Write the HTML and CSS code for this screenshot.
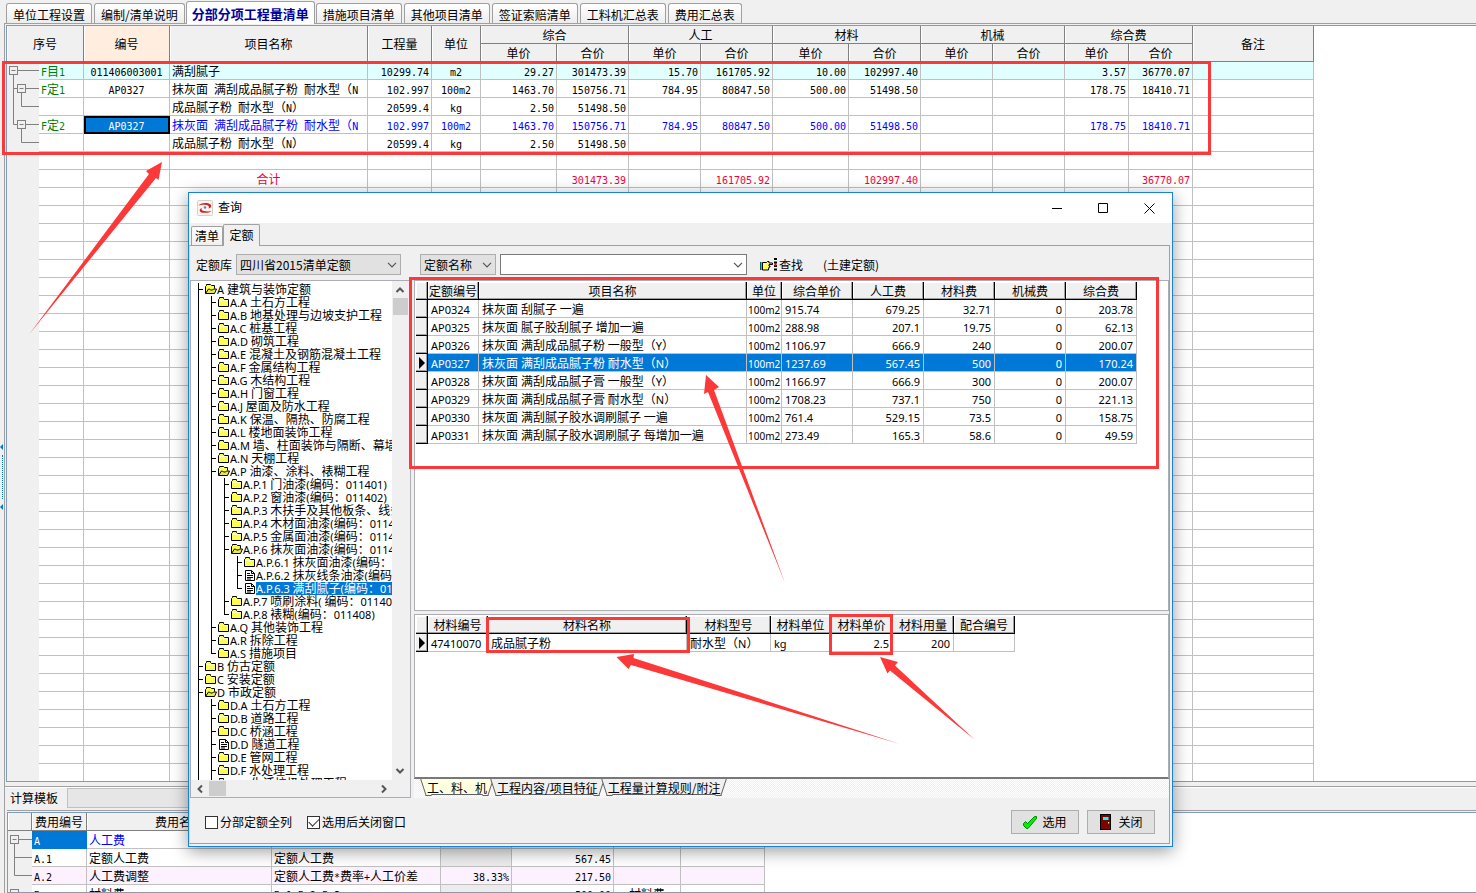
FILE: index.html
```html
<!DOCTYPE html>
<html lang="zh-CN">
<head>
<meta charset="utf-8">
<title>分部分项工程量清单</title>
<link rel="stylesheet" href="styles.css">
</head>
<body>
<svg class="defs" width="0" height="0" aria-hidden="true">
  <symbol id="folder" viewBox="0 0 12 10"><path d="M.5 9.500v-7l1-1v-1h4v1l1 1h4v7z" fill="#ffff50" stroke="#000"/><path d="M1.500 3.500h8" stroke="#ffffc8"/></symbol>
  <symbol id="open" viewBox="0 0 12 10"><path d="M.5 9V2.500l1-1v-1h4l1 1h3v3" fill="#ffff50" stroke="#000"/><path d="M.5 9.500l3-4.500h1l1 1h2l1-1h3l-2 4.500z" fill="#e8e850" stroke="#000"/></symbol>
  <symbol id="page" viewBox="0 0 12 11"><path d="M1.500.5h6l3 3v7h-9z" fill="#fff" stroke="#000"/><path d="M7.500.5v3h3M3 3.500h3M3 5.500h6M3 7.500h6M3 9h4" fill="none" stroke="#000"/></symbol>
  <symbol id="chev" viewBox="0 0 10 6"><path d="M1 .8l4 4 4-4" fill="none" stroke="#555" stroke-width="1.200"/></symbol>
  <symbol id="arrow" viewBox="0 0 10 6"><path d="M1.500 5L5 1.500 8.500 5" fill="none" stroke="#555" stroke-width="2"/></symbol>
</svg>

<div class="app">
  <div class="splitter">
    <svg width="4" height="6" viewBox="0 0 4 6"><path d="M0 3l3-3v6z" fill="#0078d7"/></svg>
    <i></i>
    <svg width="4" height="6" viewBox="0 0 4 6"><path d="M0 3l3-3v6z" fill="#0078d7"/></svg>
  </div>
  <main class="main">
    <nav class="tabs">
      <button>单位工程设置</button><button>编制/清单说明</button><button class="on">分部分项工程量清单</button><button>措施项目清单</button><button>其他项目清单</button><button>签证索赔清单</button><button>工料机汇总表</button><button>费用汇总表</button>
    </nav>
    <section class="panel">
      <div class="gridbox">
        <table class="grid">
          <colgroup id="mainCols"></colgroup>
          <thead>
            <tr><th rowspan="2" colspan="2">序号</th><th rowspan="2" class="hot">编号</th><th rowspan="2">项目名称</th><th rowspan="2">工程量</th><th rowspan="2">单位</th><th colspan="2">综合</th><th colspan="2">人工</th><th colspan="2">材料</th><th colspan="2">机械</th><th colspan="2">综合费</th><th rowspan="2">备注</th></tr>
            <tr><th>单价</th><th>合价</th><th>单价</th><th>合价</th><th>单价</th><th>合价</th><th>单价</th><th>合价</th><th>单价</th><th>合价</th></tr>
          </thead>
          <tbody id="mainRows"></tbody>
        </table>
      </div>
    </section>
    <section class="lower">
      <div class="tmpl"><label for="tmpl">计算模板</label><select id="tmpl" disabled><option></option></select></div>
      <div class="gridbox">
        <table class="grid">
          <colgroup id="feeCols"></colgroup>
          <thead><tr><th></th><th>费用编号</th><th>费用名称</th><th></th><th></th><th></th><th></th><th></th></tr></thead>
          <tbody id="feeRows"></tbody>
        </table>
      </div>
    </section>
  </main>
</div>

<div class="dialog" role="dialog" aria-labelledby="dlgTitle">
  <header class="title">
    <svg width="16" height="16" viewBox="0 0 16 16"><rect x=".5" y=".5" width="15" height="15" rx="1" fill="#fbf3f0" stroke="#d8cfcb"/><path d="M1.500 5.500C3 3 10 2 13.500 4.500c1.500 1.500.5 3.500-2 4 1-1.500.5-3-2-3.500-3-.5-6-.5-8 .5z" fill="#cf2520"/><path d="M14.500 11c-1.500 2-8 2.500-11 1-1.500-1.500-1-3.500 1.500-4-1 1.500-.5 2.500 2 3 3 .5 5.500.5 7.500 0z" fill="#cf2520"/><circle cx="8" cy="7.500" r="1.200" fill="#4a86c8"/></svg>
    <h1 id="dlgTitle">查询</h1>
    <div class="wbtns">
      <button aria-label="最小化"><svg width="11" height="11"><path d="M0 5.500h10" stroke="#000"/></svg></button>
      <button aria-label="最大化"><svg width="11" height="11"><path d="M.5.5h9v9h-9z" stroke="#000" fill="none"/></svg></button>
      <button aria-label="关闭窗口"><svg width="11" height="11"><path d="M.5.5l10 10M10.500.5l-10 10" stroke="#000"/></svg></button>
    </div>
  </header>
  <nav class="dtabs"><button>清单</button><button class="on">定额</button></nav>
  <div class="dpage">
    <div class="bar">
      <label for="lib">定额库</label>
      <span class="pick lib"><select id="lib"><option>四川省2015清单定额</option></select><svg width="10" height="6"><use href="#chev"/></svg></span>
      <span class="pick field"><select aria-label="查找字段"><option>定额名称</option></select><svg width="10" height="6"><use href="#chev"/></svg></span>
      <span class="pick text"><input type="text" aria-label="查找内容"><svg width="10" height="6"><use href="#chev"/></svg></span>
      <button class="find"><svg width="17" height="14" viewBox="0 0 17 14"><path d="M0 4h2.500v8H0z" fill="#00d0d0"/><path d="M.5 4v8" stroke="#006060"/><path d="M2.500 4.500h4l1-1h1.500v1.500h3.500v1.500H9v1.500h1v1H9v1.500h-.5v1.500h-6z" fill="#ffff60" stroke="#000"/><path d="M15.500 0v14" stroke="#000" stroke-width="3" stroke-dasharray="2 1.500"/><path d="M15.500 5v3" stroke="#e00" stroke-width="2"/></svg>查找</button>
      <span>(土建定额)</span>
    </div>
    <div class="body">
      <div class="treebox">
        <ul class="tree" id="tree"></ul>
        <div class="vs"><svg width="10" height="6"><use href="#arrow"/></svg><i></i><svg class="down" width="10" height="6"><use href="#arrow"/></svg></div>
        <div class="hs"><svg class="prev" width="10" height="6"><use href="#arrow"/></svg><i></i><svg class="next" width="10" height="6"><use href="#arrow"/></svg></div>
      </div>
      <div class="tables">
        <div class="box quota">
          <table class="db">
            <colgroup id="quotaCols"></colgroup>
            <thead><tr><th></th><th>定额编号</th><th>项目名称</th><th>单位</th><th>综合单价</th><th>人工费</th><th>材料费</th><th>机械费</th><th>综合费</th></tr></thead>
            <tbody id="quotaRows"></tbody>
          </table>
        </div>
        <div class="box mats">
          <table class="db">
            <colgroup id="matCols"></colgroup>
            <thead><tr><th></th><th>材料编号</th><th>材料名称</th><th>材料型号</th><th>材料单位</th><th>材料单价</th><th>材料用量</th><th>配合编号</th></tr></thead>
            <tbody id="matRows"></tbody>
          </table>
        </div>
        <nav class="sheets"><button class="on">工、料、机</button><button>工程内容/项目特征</button><button>工程量计算规则/附注</button></nav>
      </div>
    </div>
    <footer class="foot">
      <label><input type="checkbox">分部定额全列</label>
      <label><input type="checkbox" checked>选用后关闭窗口</label>
      <div class="acts">
        <button><svg width="14" height="13" viewBox="0 0 14 13"><path d="M.5 7.500l2-2 2 2L11.500.5h2v2L5 12.500H3.500L.5 9.500z" fill="#00f000" stroke="#008a00"/></svg>选用</button>
        <button><svg width="14" height="16" viewBox="0 0 14 16"><rect x="1.500" y=".5" width="10" height="15" fill="#800000" stroke="#000"/><path d="M4 3h5.500v3H4z" fill="#0ff"/><path d="M9 8h1.200v1.500H9z" fill="#ff0"/></svg>关闭</button>
      </div>
    </footer>
  </div>
</div>

<svg class="marks" width="1220" height="760" aria-hidden="true">
  <g fill="none" stroke="#fc3838" stroke-width="3">
    <rect x="3.500" y="62.500" width="1206" height="91"/>
    <rect x="410.500" y="278.500" width="747" height="189"/>
    <rect x="487.500" y="618.500" width="201" height="33"/>
    <rect x="830.500" y="615.500" width="61" height="38"/>
  </g>
  <g fill="#fc3838">
    <path d="M162 162L146 171l3 3L29 334.500 156 178l2.500 2z"/>
    <path d="M706 375l13 12-5 3 71 193-77-191-4 2z"/>
    <path d="M616.500 657l17.500-3-.5 4L900 744 631 665l-2.500 4z"/>
    <path d="M880 657l18 5-3 3.500L975 740l-85-69.500-2.500 3z"/>
  </g>
</svg>
<script src="app.js"></script>
</body>
</html>
```

FILE: styles.css
```css
* { box-sizing: border-box; }
html, body { height: 100%; margin: 0; }
body {
  position: relative;
  overflow: hidden;
  background: #f0f0f0;
  color: #000;
  font: 12px/16px "Noto Sans CJK SC", sans-serif;
}
button, input, select { font: inherit; color: inherit; margin: 0; }
button { border: 0; padding: 0; background: none; white-space: nowrap; }
svg { display: block; flex: none; }
.defs { position: absolute; }

.app { display: flex; height: 100%; }
.splitter { width: 4px; flex: none; display: flex; flex-direction: column; align-items: center; justify-content: center; gap: 5px; padding-top: 60px; }
.splitter i { height: 44px; border-left: 1px dotted #0078d7; }
.main { flex: 1; min-width: 0; display: flex; flex-direction: column; }

.tabs { display: flex; align-items: flex-end; gap: 2px; height: 23px; padding-left: 2px; flex: none; }
.tabs button { height: 20px; padding: 2px 6px 0; border: 1px solid #a0a0a0; border-bottom: 0; border-radius: 3px 3px 0 0; background: linear-gradient(#fff, #ececec); }
.tabs .on { height: 23px; margin: 0 -1px -1px; padding: 1px 5px 0; background: #fff; color: #0000a0; font-size: 13px; font-weight: bold; z-index: 1; }

.panel { flex: 1; min-height: 0; border: solid #a0a0a0; border-width: 1px 0 0 1px; padding: 1px 0 4px 1px; display: flex; }
.gridbox { flex: 1; min-width: 0; overflow: hidden; background: #fff; border: 1px solid #7f9db9; border-right: 0; }
.grid, .db { border-collapse: separate; border-spacing: 0; table-layout: fixed; width: 0; }
.grid th, .grid td, .db th, .db td { height: 18px; padding: 0 2px; line-height: 16px; font-weight: normal; white-space: pre; overflow: hidden; }
.grid th { background: #f0f0f0; border: solid #808080; border-width: 0 1px 1px 0; box-shadow: inset 1px 0 #fff; }
.grid th.hot { background: #ffeddf; }
.grid td { border: solid #c0c0c0; border-width: 0 1px 1px 0; }
.grid td.t { padding: 0; border: 0; background: #f0f0f0; }
.grid .r, .db .r { text-align: right; }
.grid .c { text-align: center; }
.grid .green { color: #008000; }
.grid .n { font: 10px/0 "DejaVu Sans Mono", monospace; }
.cyan td { background: #e1ffff; }
.blue td { color: #0000ff; }
.total td { color: #f0003c; }
.pink td { background: #fdf0ff; }
.grid td.sel { background: #0078d7; color: #fff; border-color: #0078d7; }
.grid td.frame { border-color: #000; box-shadow: inset 0 0 0 1px #000, inset 2px 2px #000; }
.grid td.grey { background: #ececec; }
.blue td.green { color: #008000; }

.lower { flex: none; height: 107px; border: solid #a0a0a0; border-width: 1px 0 0 1px; padding-left: 2px; display: flex; flex-direction: column; box-shadow: inset 0 1px #fff; }
.tmpl { display: flex; align-items: center; gap: 9px; height: 24px; padding: 0 0 1px 3px; border-bottom: 1px solid #a0a0a0; margin-bottom: 1px; flex: none; }
.tmpl select { width: 500px; height: 20px; appearance: none; border: 1px solid #adadad; background: #e3e3e3; }

.dialog {
  position: absolute; left: 188px; top: 192px; width: 985px; height: 655px;
  display: flex; flex-direction: column;
  border: 1px solid #1883d7; background: #f0f0f0;
  box-shadow: 0 4px 16px rgba(0, 0, 0, .4);
}
.title { display: flex; align-items: center; gap: 5px; height: 30px; padding-left: 8px; background: #fff; flex: none; }
.title h1 { margin: 0; font-size: 12px; line-height: 14px; padding-bottom: 2px; font-weight: normal; flex: 1; }
.wbtns { display: flex; height: 30px; }
.wbtns button { width: 46px; display: grid; place-items: center; }
.dtabs { display: flex; align-items: flex-end; height: 22px; padding-left: 2px; flex: none; }
.dtabs button { height: 19px; padding: 0 3px; width: 32px; border: 1px solid #a0a0a0; border-bottom: 0; border-radius: 2px 2px 0 0; background: linear-gradient(#fff, #f0f0f0); }
.dtabs .on { height: 22px; width: 37px; padding: 0 5px 2px; margin-bottom: -1px; background: #f0f0f0; z-index: 1; }
.dpage { flex: 1; min-height: 0; margin: 0 2px 2px 0; border: 1px solid #a0a0a0; border-left-color: #d8d8d8; display: flex; flex-direction: column; }
.bar { display: flex; align-items: center; height: 34px; padding: 3px 0 0 6px; flex: none; }
.pick { position: relative; height: 21px; margin-left: 4px; }
.pick select, .pick input { width: 100%; height: 21px; appearance: none; display: block; border: 1px solid #adadad; border-radius: 0; background: #e1e1e1; padding: 0 3px; outline: 0; }
.pick svg { position: absolute; right: 4px; top: 8px; }
.pick input { background: #fff; border-color: #7a7a7a; }
.lib { width: 165px; }
.field { width: 76px; margin-left: 19px; }
.text { width: 247px; }
.find { display: flex; align-items: center; gap: 2px; margin: 0 20px 0 13px; }

.body { flex: 1; min-height: 0; display: grid; grid-template-columns: 221px 1fr; gap: 3px; }
.treebox { display: grid; grid-template: 1fr 17px / 1fr 18px; min-height: 0; border: 1px solid #adadb4; background: #fff; }
.tree { list-style: none; margin: 0; padding: 2px 0 0 7px; overflow: hidden; min-height: 0; min-width: 0; }
.tree li { display: flex; height: 13px; line-height: 11px; white-space: pre; }
.tree .g { width: 13px; height: 13px; flex: none; background: linear-gradient(#000, #000) 0 0 / 1px 100% no-repeat; }
.tree .g.off { background: none; }
.tree .g.end { width: 7px; background: linear-gradient(#000, #000) 0 0 / 1px 100% no-repeat, linear-gradient(#000, #000) 0 6px / 5px 1px no-repeat; }
.tree .g.end.last { background-size: 1px 7px, 5px 1px; }
.tree svg { margin-top: 1px; }
.tree .sel { background: #0078d7; color: #fff; flex: none; }
.dialog .n { font: 11px/0 "Noto Sans", sans-serif; }
.dialog .unit { padding: 0 1px; }
.dialog .unit .n { font-size: 10px; }
.vs, .hs { background: #f0f0f0; display: flex; align-items: center; }
.vs { flex-direction: column; padding: 6px 2px 6px 0; }
.vs i { width: 15px; height: 17px; margin-top: 5px; background: #cdcdcd; }
.hs { grid-column: 1 / -1; padding: 0 21px 0 4px; }
.hs i { width: 17px; height: 15px; margin-left: 4px; background: #cdcdcd; }
.down { transform: rotate(180deg); margin-top: auto; }
.prev { transform: rotate(-90deg); }
.next { transform: rotate(90deg); margin-left: auto; }

.tables { display: flex; flex-direction: column; min-width: 0; min-height: 0; }
.box { background: #fff; border: 1px solid #adadb4; padding: 1px; overflow: hidden; }
.quota { flex: 1; }
.mats { flex: 0 0 165px; margin-top: 3px; border-bottom: 2px solid #787878; }
.db th { background: #f0f0f0; border: solid #000; border-width: 0 1px 1px 0; padding: 0; box-shadow: inset -1px -1px #a0a0a0, inset 1px 1px #fff; }
.db td { border: solid #c0c0c0; border-width: 0 1px 1px 0; }
.db td.l { padding-left: 3px; }
.db td.r { padding-right: 3px; }
.db td.ind { background: #f0f0f0; border-color: #000; padding: 0 0 0 3px; box-shadow: inset -1px -1px #a0a0a0; }
.db tr.cur td { background: #0078d7; color: #fff; }
.db tr.cur td.ind { background: #f0f0f0; }
.sheets { display: flex; height: 19px; padding-left: 10px; gap: 6px; align-items: flex-start; background: repeating-conic-gradient(#fff 0 25%, #f0f0f0 0 50%) 0 0 / 2px 2px; flex: none; }
.sheets button { position: relative; isolation: isolate; height: 16px; line-height: 17px; padding: 0 1px; margin-left: 2px; background: #f0f0f0; border-bottom: 1px solid #606060; }
.sheets button::before, .sheets button::after { content: ""; position: absolute; top: 0; width: 5px; height: 16px; background: inherit; border-bottom: 1px solid #606060; z-index: -1; }
.sheets button::before { left: -3px; transform: skewX(18deg); border-left: 1px solid #606060; }
.sheets button::after { right: -3px; transform: skewX(-18deg); border-right: 1px solid #606060; }
.sheets .on { background: #ffffe1; }

.foot { display: flex; align-items: center; gap: 15px; height: 45px; padding: 3px 14px 0 15px; flex: none; }
.foot label { display: flex; align-items: center; gap: 2px; }
.foot input { appearance: none; width: 13px; height: 13px; border: 1px solid #333; background: #fff; display: grid; place-items: center; }
.foot input:checked::after { content: ""; width: 9px; height: 5px; border: solid #333; border-width: 0 0 1px 1px; transform: rotate(-45deg); margin-bottom: 3px; }
.acts { display: flex; gap: 8px; margin-left: auto; }
.acts button { width: 68px; height: 24px; display: flex; align-items: center; justify-content: center; gap: 5px; border: 1px solid #adadad; background: #e1e1e1; }

.marks { position: absolute; left: 0; top: 0; pointer-events: none; }
```

FILE: app.js
```js
const $ = id => document.getElementById(id);
// Latin runs use their own narrower face beside the Chinese glyphs.
const fmt = s => String(s).replace(/[ -~]+/g, m => `<span class="n">${m}</span>`);
const cols = (id, list) => { $(id).innerHTML = list.map(w => `<col style="width:${w}px">`).join(''); };

const lines = {
  root: '<rect x="2.500" y="4.500" width="8" height="8"/><path d="M4.500 8.500h4M10.500 8.500H32M6.500 12.500V18"/>',
  mid: '<rect x="10.500" y="4.500" width="8" height="8"/><path d="M12.500 8.500h4M18.500 8.500H32M6.500 0v18M6.500 8.500h4M14.500 12.500V18"/>',
  last: '<rect x="10.500" y="4.500" width="8" height="8"/><path d="M12.500 8.500h4M18.500 8.500H32M6.500 0v8.500h4M14.500 12.500V18"/>',
  leaf: '<path d="M6.500 0v18M14.500 0v8.500H32"/>',
  leafEnd: '<path d="M14.500 0v8.500H32"/>',
  feeMid: '<path d="M6.500 0v18M6.500 8.500H24"/>',
  feeEnd: '<path d="M6.500 0v8.500H24"/>'
};
const tree = (k, w) => `<td class="t">${k ? `<svg width="${w}" height="18" fill="none" stroke="#808080">${lines[k]}</svg>` : ''}</td>`;

cols('mainCols', [32, 45, 86, 198, 64, 49, 76, 72, 72, 72, 76, 72, 72, 72, 64, 64, 121]);
const rows = [
  ['root', 'cyan', 'F目1', '011406003001', '满刮腻子', '10299.74', 'm2', '29.27', '301473.39', '15.70', '161705.92', '10.00', '102997.40', '', '', '3.57', '36770.07', ''],
  ['mid', '', 'F定1', 'AP0327', '抹灰面 满刮成品腻子粉 耐水型（N', '102.997', '100m2', '1463.70', '150756.71', '784.95', '80847.50', '500.00', '51498.50', '', '', '178.75', '18410.71', ''],
  ['leaf', '', '', '', '成品腻子粉 耐水型（N）', '20599.4', 'kg', '2.50', '51498.50'],
  ['last', 'blue', 'F定2', 'AP0327', '抹灰面 满刮成品腻子粉 耐水型（N', '102.997', '100m2', '1463.70', '150756.71', '784.95', '80847.50', '500.00', '51498.50', '', '', '178.75', '18410.71', ''],
  ['leafEnd', '', '', '', '成品腻子粉 耐水型（N）', '20599.4', 'kg', '2.50', '51498.50'],
  ['', ''],
  ['', 'total', '', '', '合计', '', '', '', '301473.39', '', '161705.92', '', '102997.40', '', '', '', '36770.07', '']
];
while (rows.length < 60) rows.push(['', '']);
$('mainRows').innerHTML = rows.map(([k, cls, ...v]) => {
  let h = `<tr class="${cls}">` + tree(k, 32);
  for (let i = 0; i < 16; i++) {
    let c = i === 0 ? 'green' : i === 1 || i === 4 ? 'c' : i === 2 ? (cls === 'total' ? 'c' : '') : 'r';
    if (cls === 'blue' && i === 1) c += ' sel frame';
    h += `<td class="${c}">${fmt(v[i] || '')}</td>`;
  }
  return h + '</tr>';
}).join('');

cols('feeCols', [24, 55, 185, 169, 71, 102, 67, 84]);
$('feeRows').innerHTML = [
  ['root', 'blue', 'A', '人工费', '', '', '', ''],
  ['feeMid', '', 'A.1', '定额人工费', '定额人工费', '', '567.45', ''],
  ['feeEnd', 'pink', 'A.2', '人工费调整', '定额人工费*费率+人工价差', '38.33%', '217.50', ''],
  ['root', '', 'B', '材料费', 'B.1+B.2+B.3', '', '500.00', '材料费']
].map(([k, cls, ...v]) => {
  const c = ['', '', '', 'r', 'r', 'c', ''];
  let h = `<tr class="${cls}">` + tree(k, 24);
  for (let i = 0; i < 7; i++) {
    let x = c[i];
    if (i === 0 && v[0] === 'A') x += ' sel';
    if (i === 3 && cls !== 'pink') x += ' grey';
    h += `<td class="${x}">${fmt(v[i] || '')}</td>`;
  }
  return h + '</tr>';
}).join('');

const pointer = '<svg width="6" height="12"><path d="M0 0l6 6-6 6z"/></svg>';
const db = (id, data, align, cur, paint) => {
  $(id).innerHTML = data.map((r, n) => `<tr class="${n === cur && paint ? 'cur' : ''}"><td class="ind">${n === cur ? pointer : ''}</td>` +
    r.map((v, i) => `<td class="${align[i]}">${fmt(v)}</td>`).join('') + '</tr>').join('');
};
cols('quotaCols', [12, 51, 268, 35, 71, 71, 71, 71, 71]);
db('quotaRows', [
  ['AP0324', '抹灰面 刮腻子 一遍', '100m2', '915.74', '679.25', '32.71', '0', '203.78'],
  ['AP0325', '抹灰面 腻子胶刮腻子 增加一遍', '100m2', '288.98', '207.1', '19.75', '0', '62.13'],
  ['AP0326', '抹灰面 满刮成品腻子粉 一般型（Y）', '100m2', '1106.97', '666.9', '240', '0', '200.07'],
  ['AP0327', '抹灰面 满刮成品腻子粉 耐水型（N）', '100m2', '1237.69', '567.45', '500', '0', '170.24'],
  ['AP0328', '抹灰面 满刮成品腻子膏 一般型（Y）', '100m2', '1166.97', '666.9', '300', '0', '200.07'],
  ['AP0329', '抹灰面 满刮成品腻子膏 耐水型（N）', '100m2', '1708.23', '737.1', '750', '0', '221.13'],
  ['AP0330', '抹灰面 满刮腻子胶水调刷腻子 一遍', '100m2', '761.4', '529.15', '73.5', '0', '158.75'],
  ['AP0331', '抹灰面 满刮腻子胶水调刷腻子 每增加一遍', '100m2', '273.49', '165.3', '58.6', '0', '49.59']
], ['l', 'l', 'unit', 'l', 'r', 'r', 'r', 'r'], 3, true);
cols('matCols', [12, 60, 199, 84, 60, 62, 61, 61]);
db('matRows', [['47410070', '成品腻子粉', '耐水型（N）', 'kg', '2.5', '200', '']], ['l', 'l', 'l', 'l', 'r', 'r', ''], 0, false);

const nodes = `0o A 建筑与装饰定额
1f A.A 土石方工程
1f A.B 地基处理与边坡支护工程
1f A.C 桩基工程
1f A.D 砌筑工程
1f A.E 混凝土及钢筋混凝土工程
1f A.F 金属结构工程
1f A.G 木结构工程
1f A.H 门窗工程
1f A.J 屋面及防水工程
1f A.K 保温、隔热、防腐工程
1f A.L 楼地面装饰工程
1f A.M 墙、柱面装饰与隔断、幕墙工程
1f A.N 天棚工程
1o A.P 油漆、涂料、裱糊工程
2f A.P.1 门油漆(编码：011401)
2f A.P.2 窗油漆(编码：011402)
2f A.P.3 木扶手及其他板条、线条油漆
2f A.P.4 木材面油漆(编码：011404)
2f A.P.5 金属面油漆(编码：011405)
2o A.P.6 抹灰面油漆(编码：011406)
3f A.P.6.1 抹灰面油漆(编码：011406001)
3p A.P.6.2 抹灰线条油漆(编码：011406002)
3p*A.P.6.3 满刮腻子(编码：011406003)
2f A.P.7 喷刷涂料( 编码：011407)
2f A.P.8 裱糊(编码：011408)
1f A.Q 其他装饰工程
1f A.R 拆除工程
1f A.S 措施项目
0f B 仿古定额
0f C 安装定额
0o D 市政定额
1f D.A 土石方工程
1f D.B 道路工程
1f D.C 桥涵工程
1p D.D 隧道工程
1f D.E 管网工程
1f D.F 水处理工程
1f D.G 生活垃圾处理工程
1f D.H 路灯工程
0f E 园林绿化定额`.split('\n').map(s => ({ d: +s[0], k: s[1], sel: s[2] === '*', t: s.slice(3) }));
const icon = { o: 'open', f: 'folder', p: 'page' };
// A guide continues while a sibling at that depth is still to come.
const more = (i, d) => {
  for (let j = i + 1; j < nodes.length && nodes[j].d >= d; j++) if (nodes[j].d === d) return true;
  return false;
};
$('tree').innerHTML = nodes.map((n, i) => {
  let h = '<li>';
  for (let d = 0; d < n.d; d++) h += `<span class="g${more(i, d) ? '' : ' off'}"></span>`;
  h += `<span class="g end${more(i, n.d) ? '' : ' last'}"></span>`;
  const hgt = n.k === 'p' ? 11 : 10;
  return h + `<svg width="12" height="${hgt}"><use href="#${icon[n.k]}"/></svg><span class="${n.sel ? 'sel' : ''}">${fmt(n.t)}</span></li>`;
}).join('');
```
